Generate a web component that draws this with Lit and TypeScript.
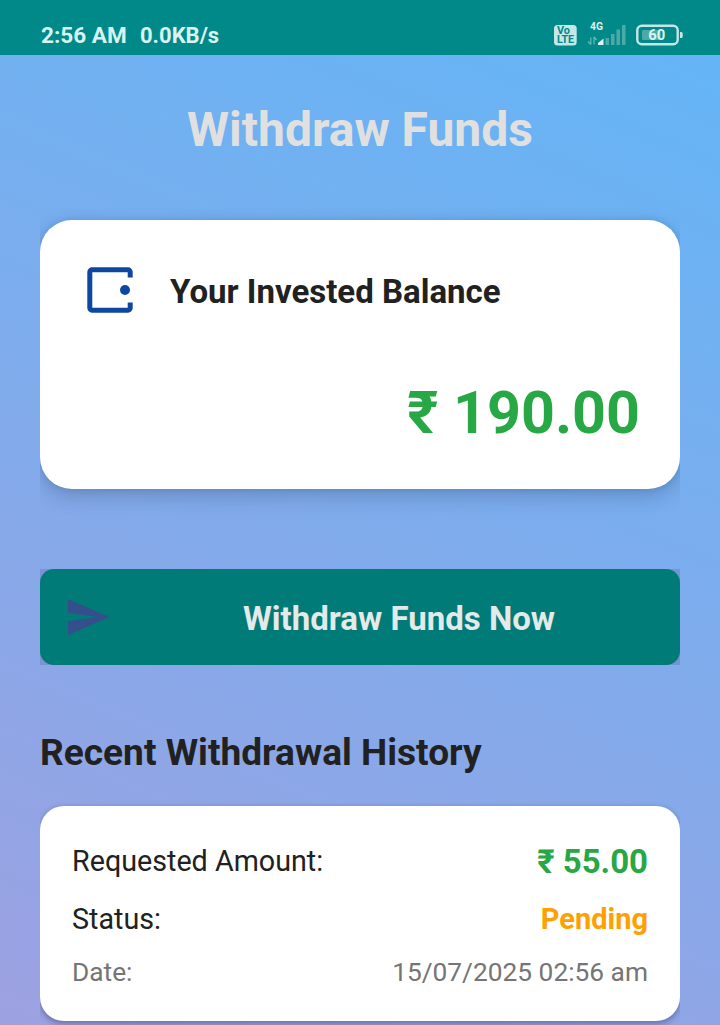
import { LitElement, html, css, svg } from "lit";
import { customElement } from "lit/decorators.js";

@customElement("status-bar")
class StatusBar extends LitElement {
  static styles = css`
    :host {
      display: flex;
      box-sizing: border-box;
      height: 55px;
      padding: 15px 36px 0 41px;
      background: #008988;
      color: #d9f3f1;
      font-size: 22px;
      font-weight: 700;
      line-height: 42px;
    }
    .time { width: 99px; font-size: 22.6px; }
    .rate { flex: 1; }
    .icons { display: block; margin-top: 5px; }
    .badge { font: 700 10px Roboto, sans-serif; fill: #008988; }
    .net { font: 700 10px Roboto, sans-serif; fill: #d9f3f1; }
    .level { font: 700 15.5px Roboto, sans-serif; fill: #d9f3f1; }
  `;

  render() {
    const bars = [
      { x: 605.5, y: 38 },
      { x: 611, y: 34 },
      { x: 616.5, y: 29.5 },
      { x: 622, y: 25 },
    ];
    return html`
      <span class="time">2:56 AM</span>
      <span class="rate">0.0KB/s</span>
      <svg class="icons" width="130" height="30" viewBox="554 20 130 30">
        <rect x="554" y="25" width="22.7" height="20.5" rx="3.5" fill="#c5e8e6" />
        <text class="badge" x="557" y="34.2" textLength="13" lengthAdjust="spacingAndGlyphs">Vo</text>
        <text class="badge" x="557" y="43.2" textLength="17" lengthAdjust="spacingAndGlyphs">LTE</text>
        <text class="net" x="590" y="30.4" textLength="13" lengthAdjust="spacingAndGlyphs">4G</text>
        <path d="M590.8 44.5V37.5M588 41.5l2.8 3M594 37v7.5M594 37l2.6 3" fill="none" stroke="#66b7b4" stroke-width="1.3" />
        <path d="M598 45V43L603.5 38.5V45z" fill="#d9f3f1" />
        ${bars.map((b) => svg`<rect x=${b.x} y=${b.y} width="3.5" height=${45 - b.y} fill="#4da9a7" />`)}
        <rect x="637.3" y="25.8" width="40.4" height="18.4" rx="4.5" fill="none" stroke="#c5e8e6" stroke-width="2.4" />
        <rect x="642" y="30" width="19" height="10" rx="1.5" fill="#4da9a7" />
        <path d="M680 32h1.2a1.5 1.5 0 0 1 1.5 1.5v3a1.5 1.5 0 0 1-1.5 1.5H680z" fill="#c5e8e6" />
        <text class="level" x="648.3" y="40.4" textLength="17" lengthAdjust="spacingAndGlyphs">60</text>
      </svg>
    `;
  }
}

@customElement("balance-card")
class BalanceCard extends LitElement {
  static styles = css`
    :host {
      display: block;
      margin: 0 40px;
      padding: 20px 0 80px;
      overflow: hidden;
    }
    .card {
      box-sizing: border-box;
      height: 269px;
      padding: 40px;
      background: #fff;
      border-radius: 32px;
      box-shadow: 0 7px 20px rgba(20, 40, 70, 0.24), 0 0 6px rgba(20, 40, 70, 0.12);
    }
    .head { display: flex; align-items: center; height: 60px; gap: 30px; }
    .wallet { display: block; width: 60px; height: 60px; }
    .label { padding-top: 3px; font-size: 33px; font-weight: 700; color: #212121; }
    .amount {
      margin-top: 53px;
      text-align: right;
      font-size: 59.2px;
      line-height: 80px;
      font-weight: 700;
      color: #28a745;
    }
  `;

  render() {
    return html`
      <div class="card">
        <div class="head">
          <svg class="wallet" viewBox="80 260 60 60">
            <path d="M130.2 277.5V272a2.2 2.2 0 0 0-2.2-2.2H92a2.2 2.2 0 0 0-2.2 2.2v36a2.2 2.2 0 0 0 2.2 2.2h36a2.2 2.2 0 0 0 2.2-2.2v-5.5" fill="none" stroke="#0d47a1" stroke-width="5" />
            <circle cx="125" cy="290" r="5" fill="#0d47a1" />
          </svg>
          <span class="label">Your Invested Balance</span>
        </div>
        <div class="amount">₹ 190.00</div>
      </div>
    `;
  }
}

@customElement("withdraw-button")
class WithdrawButton extends LitElement {
  static styles = css`
    :host {
      display: block;
      margin: 0 40px;
      background: rgba(75, 75, 130, 0.22);
    }
    .button {
      display: flex;
      align-items: center;
      width: 100%;
      height: 96px;
      padding: 0 0 0 24px;
      border: 0;
      border-radius: 14px;
      background: #007b77;
      font: 700 33px Roboto, sans-serif;
      color: #e4e9e9;
    }
    .send { flex: none; width: 48px; height: 48px; }
    .text { flex: 1; padding: 2px 0 0 6px; }
  `;

  render() {
    return html`
      <button class="button">
        <svg class="send" viewBox="0 0 24 24">
          <path d="M2.01 21L22.7 12 2.01 3 2 10l15 2-15 2z" fill="#34508c" />
        </svg>
        <span class="text">Withdraw Funds Now</span>
      </button>
    `;
  }
}

@customElement("history-card")
class HistoryCard extends LitElement {
  static styles = css`
    :host { display: block; margin: 0 40px; padding: 10px 0 20px; overflow: hidden; }
    .card {
      box-sizing: border-box;
      height: 215px;
      padding: 32px;
      background: #fff;
      border-radius: 24px;
      box-shadow: 0 3px 6px rgba(20, 30, 70, 0.34), 0 0 4px rgba(20, 30, 70, 0.06);
    }
    .row {
      display: flex;
      justify-content: space-between;
      align-items: center;
      height: 46px;
      font-size: 28.7px;
      color: #212121;
    }
    .status { margin-top: 12px; }
    .date { margin-top: 10px; height: 40px; font-size: 26.3px; color: #757575; }
    .amount { font-size: 33px; font-weight: 700; color: #28a745; }
    .pending { font-size: 29px; font-weight: 700; color: #ffa000; }
  `;

  render() {
    return html`
      <div class="card">
        <div class="row"><span class="key">Requested Amount:</span><span class="amount">₹ 55.00</span></div>
        <div class="row status"><span class="key">Status:</span><span class="pending">Pending</span></div>
        <div class="row date"><span class="key">Date:</span><span class="when">15/07/2025 02:56 am</span></div>
      </div>
    `;
  }
}

@customElement("app-root")
class AppRoot extends LitElement {
  static styles = css`
    :host {
      display: block;
      height: 1025px;
      overflow: hidden;
      font-family: Roboto, sans-serif;
    }
    .screen {
      height: 970px;
      background: linear-gradient(203deg, #64b5f6, #9da1e1);
    }
    .title {
      margin: 0;
      height: 145px;
      padding-top: 41px;
      box-sizing: border-box;
      text-align: center;
      font-size: 48px;
      line-height: 68px;
      font-weight: 700;
      color: #e0e0e0;
    }
    .history {
      margin: 0;
      height: 131px;
      padding: 63px 40px 0;
      box-sizing: border-box;
      font-size: 37.1px;
      line-height: 50px;
      font-weight: 700;
      color: #212121;
    }
  `;

  render() {
    return html`
      <status-bar></status-bar>
      <main class="screen">
        <h1 class="title">Withdraw Funds</h1>
        <balance-card></balance-card>
        <withdraw-button></withdraw-button>
        <h2 class="history">Recent Withdrawal History</h2>
        <history-card></history-card>
      </main>
    `;
  }
}
